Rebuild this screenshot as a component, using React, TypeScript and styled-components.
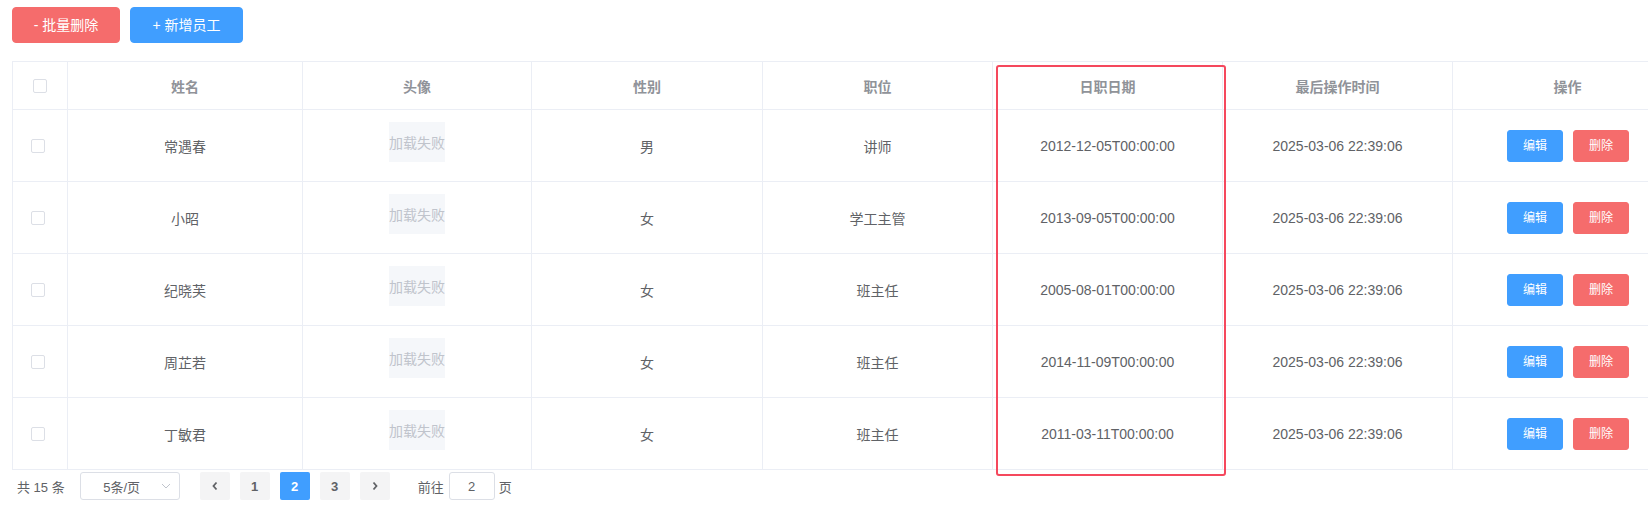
import * as React from 'react';
import styled, { createGlobalStyle } from 'styled-components';

const GlobalStyle = createGlobalStyle`
    html, body {
        margin: 0;
        padding: 0;
        background: #ffffff;
        overflow: hidden;
    }
    body {
        font-family: "Liberation Sans", "Noto Sans CJK SC", sans-serif;
        color: #606266;
    }
`;

const Page = styled.div`
    position: relative;
    width: 1648px;
    height: 508px;
    padding: 7px 0 0 12px;
    box-sizing: border-box;
`;

const Toolbar = styled.div`
    display: flex;
    gap: 10px;
    margin-bottom: 18px;
`;

const Button = styled.button<{ $kind: 'primary' | 'danger'; $small?: boolean; $w?: number }>`
    font-family: inherit;
    font-size: ${(p) => (p.$small ? '12px' : '14px')};
    line-height: 1;
    color: #ffffff;
    background: ${(p) => (p.$kind === 'primary' ? '#409eff' : '#f56c6c')};
    border: 1px solid ${(p) => (p.$kind === 'primary' ? '#409eff' : '#f56c6c')};
    border-radius: ${(p) => (p.$small ? '3px' : '4px')};
    height: ${(p) => (p.$small ? '32px' : '36px')};
    width: ${(p) => (p.$w ? `${p.$w}px` : 'auto')};
    padding: ${(p) => (p.$small ? '0 15px' : '0')};
    box-sizing: border-box;
    cursor: pointer;
    white-space: nowrap;
`;

const Table = styled.div`
    display: grid;
    grid-template-columns: 55px 235px 229px 231px repeat(4, 230px);
    width: 1671px;
    border-left: 1px solid #ebeef5;
    border-top: 1px solid #ebeef5;
`;

const Cell = styled.div<{ $head?: boolean }>`
    box-sizing: border-box;
    height: ${(p) => (p.$head ? '48px' : '72px')};
    border-right: 1px solid #ebeef5;
    border-bottom: 1px solid #ebeef5;
    display: flex;
    align-items: center;
    justify-content: center;
    font-size: 14px;
    color: ${(p) => (p.$head ? '#909399' : '#606266')};
    font-weight: ${(p) => (p.$head ? 700 : 400)};
    white-space: nowrap;
`;

const Check = styled.span<{ $shift?: number }>`
    width: 14px;
    height: 14px;
    box-sizing: border-box;
    border: 1px solid #dcdfe6;
    border-radius: 2px;
    background: #ffffff;
    margin-left: ${(p) => p.$shift ?? 0}px;
`;

const Avatar = styled.div`
    width: 56px;
    height: 40px;
    background: #f5f7fa;
    color: #c0c4cc;
    font-size: 14px;
    display: flex;
    align-items: center;
    justify-content: center;
    margin-bottom: 7px;
`;

const Actions = styled.div`
    display: flex;
    gap: 10px;
    margin-left: 1px;
`;

const Pager = styled.div`
    display: flex;
    align-items: center;
    height: 28px;
    margin-top: 2px;
    padding: 0 5px;
    font-size: 13px;
    color: #606266;
`;

const Total = styled.span`
    margin-right: 15px;
`;

const Sizes = styled.div`
    position: relative;
    width: 100px;
    height: 28px;
    box-sizing: border-box;
    border: 1px solid #dcdfe6;
    border-radius: 3px;
    display: flex;
    align-items: center;
    justify-content: center;
    padding-right: 16px;
    margin-right: 20px;
    font-size: 13px;
    color: #606266;

    svg {
        position: absolute;
        right: 8px;
        top: 9px;
    }
`;

const PageBtn = styled.div<{ $active?: boolean }>`
    width: 30px;
    height: 28px;
    margin-right: 10px;
    border-radius: 2px;
    display: flex;
    align-items: center;
    justify-content: center;
    font-size: 13px;
    font-weight: 700;
    background: ${(p) => (p.$active ? '#409eff' : '#f4f4f5')};
    color: ${(p) => (p.$active ? '#ffffff' : '#606266')};
`;

const Jumper = styled.div`
    display: flex;
    align-items: center;
    margin-left: 18px;
`;

const JumpInput = styled.div`
    width: 46px;
    height: 28px;
    box-sizing: border-box;
    margin: 0 4px 0 5px;
    border: 1px solid #dcdfe6;
    border-radius: 3px;
    display: flex;
    align-items: center;
    justify-content: center;
    font-size: 13px;
`;

const Highlight = styled.div`
    position: absolute;
    left: 996px;
    top: 65px;
    width: 230px;
    height: 411px;
    box-sizing: border-box;
    border: 2px solid #f5485d;
    border-radius: 3px;
    pointer-events: none;
`;

const rows = [
    { name: '常遇春', gender: '男', job: '讲师', entry: '2012-12-05T00:00:00' },
    { name: '小昭', gender: '女', job: '学工主管', entry: '2013-09-05T00:00:00' },
    { name: '纪晓芙', gender: '女', job: '班主任', entry: '2005-08-01T00:00:00' },
    { name: '周芷若', gender: '女', job: '班主任', entry: '2014-11-09T00:00:00' },
    { name: '丁敏君', gender: '女', job: '班主任', entry: '2011-03-11T00:00:00' },
];

const heads = ['姓名', '头像', '性别', '职位', '日职日期', '最后操作时间', '操作'];

const Chevron = ({ dir }: { dir: 'left' | 'right' }) => (
    <svg width="8" height="10" viewBox="0 0 8 10">
        <polyline
            points={dir === 'left' ? '5.5,1.5 2.5,5 5.5,8.5' : '2.5,1.5 5.5,5 2.5,8.5'}
            fill="none"
            stroke="#606266"
            strokeWidth="1.8"
        />
    </svg>
);

export default function App() {
    return (
        <Page>
            <GlobalStyle />
            <Toolbar>
                <Button $kind="danger" $w={108}>- 批量删除</Button>
                <Button $kind="primary" $w={113}>+ 新增员工</Button>
            </Toolbar>

            <Table>
                <Cell $head><Check /></Cell>
                {heads.map((h) => <Cell $head key={h}>{h}</Cell>)}
                {rows.map((r) => (
                    <React.Fragment key={r.name}>
                        <Cell><Check $shift={-4} /></Cell>
                        <Cell>{r.name}</Cell>
                        <Cell><Avatar>加载失败</Avatar></Cell>
                        <Cell>{r.gender}</Cell>
                        <Cell>{r.job}</Cell>
                        <Cell>{r.entry}</Cell>
                        <Cell>2025-03-06 22:39:06</Cell>
                        <Cell>
                            <Actions>
                                <Button $kind="primary" $small>编辑</Button>
                                <Button $kind="danger" $small>删除</Button>
                            </Actions>
                        </Cell>
                    </React.Fragment>
                ))}
            </Table>

            <Pager>
                <Total>共 15 条</Total>
                <Sizes>
                    5条/页
                    <svg width="10" height="8" viewBox="0 0 10 8">
                        <polyline points="1,2 5,6 9,2" fill="none" stroke="#c0c4cc" strokeWidth="1" />
                    </svg>
                </Sizes>
                <PageBtn><Chevron dir="left" /></PageBtn>
                <PageBtn>1</PageBtn>
                <PageBtn $active>2</PageBtn>
                <PageBtn>3</PageBtn>
                <PageBtn><Chevron dir="right" /></PageBtn>
                <Jumper>
                    前往
                    <JumpInput>2</JumpInput>
                    页
                </Jumper>
            </Pager>

            <Highlight />
        </Page>
    );
}
